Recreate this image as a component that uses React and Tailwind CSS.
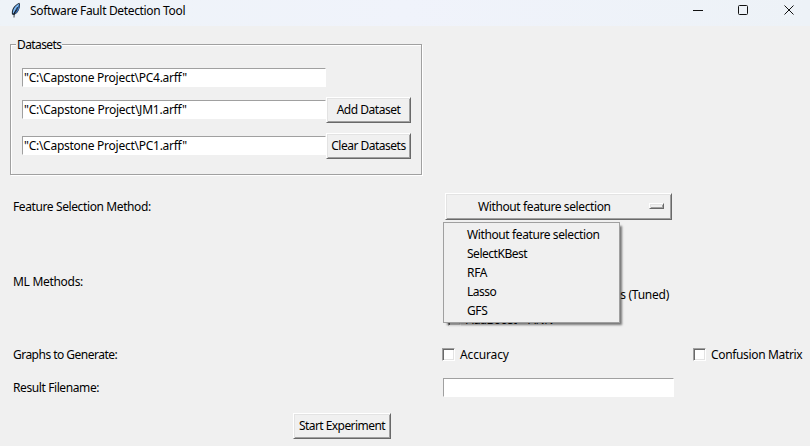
const raised =
  "border border-t-white border-l-white border-r-[#696969] border-b-[#696969] shadow-[inset_1px_1px_0_#e3e3e3,inset_-1px_-1px_0_#a0a0a0]";

function Entry({ className = "", children }) {
  return (
    <div
      className={`flex h-[19px] items-center border border-t-[#a0a0a0] border-r-white border-b-white border-l-[#a0a0a0] bg-white pl-px ${className}`}
    >
      {children}
    </div>
  );
}

function Button({ className = "", children }) {
  return (
    <button className={`flex h-[26px] shrink-0 items-center justify-center bg-[#f0f0f0] ${raised} ${className}`}>
      {children}
    </button>
  );
}

function Check({ label, tracking }) {
  return (
    <label className="flex h-[17px] items-center">
      <span className="block size-[13px] border border-t-[#a0a0a0] border-r-white border-b-white border-l-[#a0a0a0] bg-white shadow-[inset_1px_1px_0_#696969,inset_-1px_-1px_0_#e3e3e3]" />
      <span className={`ml-[5px] ${tracking}`}>{label}</span>
    </label>
  );
}

function TitleBar() {
  return (
    <header className="flex h-[26px] items-start bg-gradient-to-r from-[#eef3f8] via-[#f0f3fb] to-[#edf2f7]">
      <svg className="mt-[2px] ml-[10px] h-4 w-3" viewBox="0 0 12 16">
        <path d="M2 12.5C1 8 4 3 9.3 .8C11 3 9.5 8 7 11L4 13Z" fill="#1c2836" />
        <path d="M2.9 11.3C2.6 7.5 5.5 3.5 8.9 1.8C9.2 5 6 8 3.6 11.6Z" fill="#7db8f2" />
        <path d="M4.6 11.8C6.6 8.8 8.6 6 9.2 2.4C10.1 5.5 8.4 9 6.2 11Z" fill="#3f78c4" />
        <path d="M4 15.5L4.2 11L7.6 5" fill="none" stroke="#10151c" strokeWidth=".8" />
      </svg>
      <h1 className="mt-[3px] ml-2 w-[160px] text-[12px] leading-4 tracking-[-0.34px]">Software Fault Detection Tool</h1>
      <svg className="mt-[4px] ml-auto h-3 w-[103px] shrink-0" viewBox="0 0 103 12" fill="none" stroke="#111" strokeWidth="1">
        <path d="M0 6.5H10" />
        <rect x="45.5" y="1.5" width="9" height="9" rx="1" />
        <path d="M91.5 1.5L100.5 10.5M100.5 1.5L91.5 10.5" />
      </svg>
      <span className="w-[14px] shrink-0" />
    </header>
  );
}

export default function App() {
  return (
    <div className="relative h-[446px] w-[810px] overflow-hidden bg-[#f0f0f0] font-['Noto_Sans','Open_Sans',sans-serif] text-[12px] leading-4 whitespace-nowrap text-black">
      <TitleBar />

      <fieldset className="relative mt-[18px] ml-[10px] h-[131px] w-[412px] border border-[#a0a0a0] pt-[23px] pl-[11px] shadow-[inset_1px_1px_0_#fff,1px_1px_0_#fff]">
        <span className="absolute top-[-8px] left-[5px] bg-[#f0f0f0] px-px tracking-[-0.6px]">Datasets</span>
        <Entry className="w-[304px]">
          <span className="tracking-[-0.26px]">"C:\Capstone Project\PC4.arff"</span>
        </Entry>
        <div className="mt-[10px] flex h-[26px]">
          <Entry className="mt-[3px] w-[304px]">
            <span className="tracking-[-0.24px]">"C:\Capstone Project\JM1.arff"</span>
          </Entry>
          <Button className="w-[85px] tracking-[-0.48px]">Add Dataset</Button>
        </div>
        <div className="mt-[10px] flex h-[26px]">
          <Entry className="mt-[3px] w-[304px]">
            <span className="tracking-[-0.26px]">"C:\Capstone Project\PC1.arff"</span>
          </Entry>
          <Button className="w-[85px] tracking-[-0.5px]">Clear Datasets</Button>
        </div>
      </fieldset>

      <main className="pl-[13px]">
        <section className="mt-[18px] flex h-[27px] items-center">
          <span className="w-[432px] tracking-[-0.39px]">Feature Selection Method:</span>
          <div className={`flex h-[27px] w-[227px] items-center pl-8 ${raised}`}>
            <span className="tracking-[-0.39px]">Without feature selection</span>
            <span className={`mr-[7px] mb-px ml-auto h-[6px] w-[15px] ${raised}`} />
          </div>
        </section>

        <section className="mt-[26px] flex h-[82px]">
          <span className="mt-[28px] w-[435px] tracking-[-0.3px]">ML Methods:</span>
          <div className="flex w-[221px] flex-col">
            <span className="mt-[41px] self-end tracking-[-0.25px]">s (Tuned)</span>
            <div className="mt-[8px]">
              <Check label="AdaBoost + ANN" tracking="tracking-[-0.45px]" />
            </div>
          </div>
        </section>

        <section className="mt-[18px] flex h-[17px] items-center">
          <span className="w-[429px] tracking-[-0.52px]">Graphs to Generate:</span>
          <div className="w-[251px]">
            <Check label="Accuracy" tracking="tracking-[-0.15px]" />
          </div>
          <Check label="Confusion Matrix" tracking="tracking-[-0.34px]" />
        </section>

        <section className="mt-[15px] flex h-[19px] items-center">
          <span className="w-[430px] tracking-[-0.4px]">Result Filename:</span>
          <Entry className="w-[231px]" />
        </section>
        <Button className="mt-4 ml-[280px] w-[98px] tracking-[-0.55px]">Start Experiment</Button>
      </main>

      <ul className="absolute top-[222px] left-[443px] h-[101px] w-[177px] border border-[#a0a0a0] bg-[#f0f0f0] pt-[2px] pl-[23px] leading-[19px] shadow-[3px_3px_2px_-1px_rgba(0,0,0,0.5)]">
        <li className="tracking-[-0.39px]">Without feature selection</li>
        <li className="tracking-[-0.48px]">SelectKBest</li>
        <li className="tracking-[-0.3px]">RFA</li>
        <li className="tracking-[-0.5px]">Lasso</li>
        <li className="tracking-[-0.4px]">GFS</li>
      </ul>
    </div>
  );
}
